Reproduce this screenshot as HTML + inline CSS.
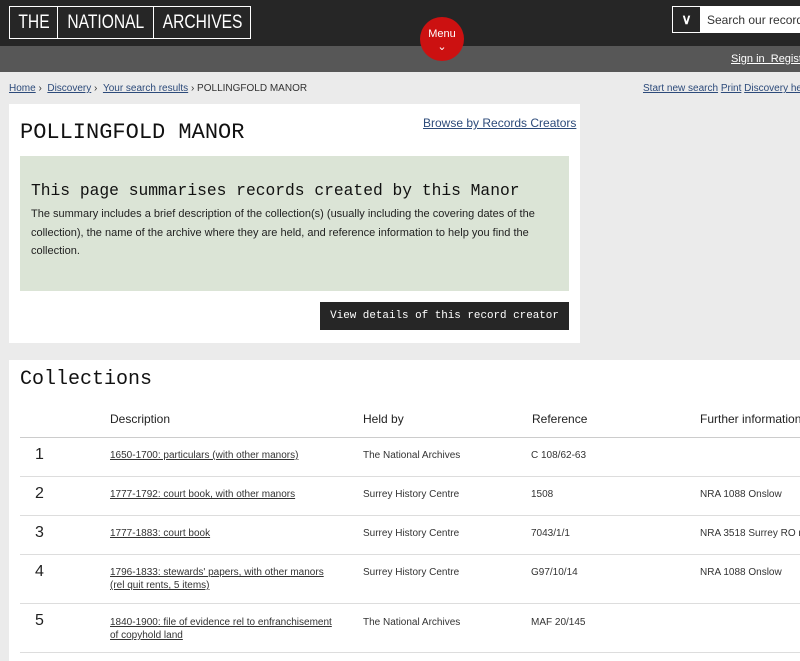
<!DOCTYPE html>
<html><head><meta charset="utf-8"><style>
*{margin:0;padding:0;box-sizing:border-box}
body{width:800px;height:661px;overflow:hidden;background:#ebebeb;font-family:"Liberation Sans",sans-serif;position:relative}
.hd{position:absolute;left:0;top:0;width:800px;height:46px;background:#262626}
.bar{position:absolute;left:0;top:46px;width:800px;height:26px;background:#575757}
.logo{position:absolute;left:9px;top:6px;height:33px;width:242px;border:1px solid #fff;color:#fff;font-size:19px}
.logo span{position:absolute;top:0;height:31px;padding-top:5px;text-align:center;border-right:1px solid #fff;white-space:nowrap}
.logo span em{font-style:normal;display:inline-block;transform:scaleX(.82)}
.menu{position:absolute;left:420px;top:17px;width:44px;height:44px;border-radius:50%;background:#cc1111;color:#fff;font-size:11px;text-align:center;padding-top:11px}
.srch{position:absolute;left:672px;top:6px;width:130px;height:27px;border:1px solid #fff;background:#fff;display:flex}
.srch b{width:27px;background:#262626;color:#fff;text-align:center;font-size:14px;line-height:25px;flex:none}
.srch i{font-style:normal;font-size:12px;color:#333;padding:6px 0 0 7px;white-space:nowrap}
.sign{position:absolute;top:53px;left:731px;font-size:11px;color:#fff;text-decoration:underline;white-space:nowrap}
a,.u{color:#2c4a7a;text-decoration:underline}
.bc{position:absolute;top:83px;left:9px;font-size:10px;color:#333}
.bcr{position:absolute;top:83px;left:643px;font-size:10px;white-space:nowrap}
.p1{position:absolute;left:9px;top:104px;width:571px;height:239px;background:#fff}
.mono{font-family:"Liberation Mono","DejaVu Sans Mono",monospace}
h1{position:absolute;left:11px;top:16px;font-weight:normal;font-size:22px;color:#111}
.brw{position:absolute;left:414px;top:12px;font-size:12px}
.gr{position:absolute;left:11px;top:52px;width:549px;height:135px;background:#dbe4d6;padding:25px 11px 0}
.gr h2{font-weight:normal;font-size:16.3px;color:#111;margin-bottom:5px;white-space:nowrap}
.gr p{font-size:11px;line-height:18.5px;color:#222}
.btn{position:absolute;left:311px;top:198px;width:249px;height:28px;background:#262626;color:#fff;font-size:10.9px;padding-top:8px;text-align:center;white-space:nowrap}
.p2{position:absolute;left:9px;top:360px;width:800px;height:301px;background:#fff}
.p2 h3{position:absolute;left:11px;top:8px;font-weight:normal;font-size:20px;color:#111}
.th{position:absolute;top:52px;font-size:12px;color:#222}
.ln{position:absolute;left:11px;width:790px;height:1px;background:#ddd}
.c{position:absolute;font-size:10px;color:#333;white-space:nowrap;line-height:13px}
.n{position:absolute;left:26px;font-size:16px;color:#222}
</style></head><body>
<div class="hd"></div><div class="bar"></div>
<div class="logo"><span style="left:0;width:48px"><em>THE</em></span><span style="left:48px;width:96px"><em>NATIONAL</em></span><span style="left:144px;width:97px;border:0"><em>ARCHIVES</em></span></div>
<div class="menu">Menu<br>⌄</div>
<div class="srch"><b>∨</b><i>Search our records</i></div>
<div class="sign">Sign in &nbsp;Register</div>
<div class="bc"><a>Home</a> › &nbsp;<a>Discovery</a> › &nbsp;<a>Your search results</a> › POLLINGFOLD MANOR</div>
<div class="bcr"><a>Start new search</a> <a>Print</a> <a>Discovery help</a></div>
<div class="p1">
<h1 class="mono">POLLINGFOLD MANOR</h1>
<a class="brw">Browse by Records Creators</a>
<div class="gr"><h2 class="mono">This page summarises records created by this Manor</h2>
<p>The summary includes a brief description of the collection(s) (usually including the covering dates of the collection), the name of the archive where they are held, and reference information to help you find the collection.</p></div>
<div class="btn mono">View details of this record creator</div>
</div>
<div class="p2">
<h3 class="mono">Collections</h3>
<div class="th" style="left:101px">Description</div>
<div class="th" style="left:354px">Held by</div>
<div class="th" style="left:523px">Reference</div>
<div class="th" style="left:691px">Further information</div>
<div class="ln" style="top:77px;background:#ccc"></div>
<div class="n" style="top:86px">1</div><div class="c u" style="left:101px;top:89px">1650-1700: particulars (with other manors)</div><div class="c" style="left:354px;top:89px">The National Archives</div><div class="c" style="left:522px;top:89px">C 108/62-63</div>
<div class="ln" style="top:116px"></div>
<div class="n" style="top:125px">2</div><div class="c u" style="left:101px;top:128px">1777-1792: court book, with other manors</div><div class="c" style="left:354px;top:128px">Surrey History Centre</div><div class="c" style="left:522px;top:128px">1508</div><div class="c" style="left:691px;top:128px">NRA 1088 Onslow</div>
<div class="ln" style="top:155px"></div>
<div class="n" style="top:164px">3</div><div class="c u" style="left:101px;top:167px">1777-1883: court book</div><div class="c" style="left:354px;top:167px">Surrey History Centre</div><div class="c" style="left:522px;top:167px">7043/1/1</div><div class="c" style="left:691px;top:167px">NRA 3518 Surrey RO misc</div>
<div class="ln" style="top:194px"></div>
<div class="n" style="top:203px">4</div><div class="c u" style="left:101px;top:206px">1796-1833: stewards' papers, with other manors<br>(rel quit rents, 5 items)</div><div class="c" style="left:354px;top:206px">Surrey History Centre</div><div class="c" style="left:522px;top:206px">G97/10/14</div><div class="c" style="left:691px;top:206px">NRA 1088 Onslow</div>
<div class="ln" style="top:243px"></div>
<div class="n" style="top:252px">5</div><div class="c u" style="left:101px;top:256px">1840-1900: file of evidence rel to enfranchisement<br>of copyhold land</div><div class="c" style="left:354px;top:256px">The National Archives</div><div class="c" style="left:522px;top:256px">MAF 20/145</div>
<div class="ln" style="top:292px"></div>
</div>
</body></html>
